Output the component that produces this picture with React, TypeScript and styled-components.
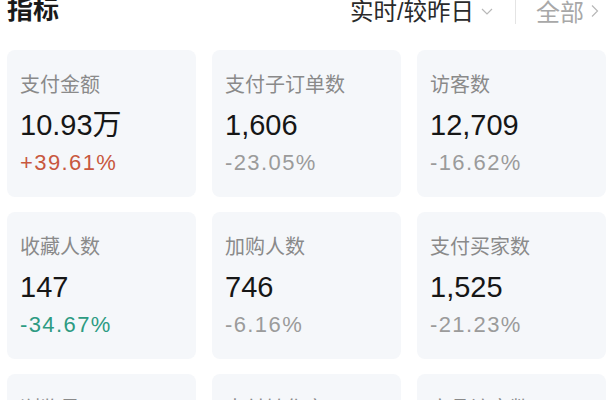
import React from 'react';
import styled, { createGlobalStyle } from 'styled-components';

type Trend = 'up' | 'down' | 'flat';

interface Metric {
  label: string,
  value: string,
  change: string,
  trend: Trend
}

const metrics: Metric[] = [
  {label: '支付金额', value: '10.93万', change: '+39.61%', trend: 'up'},
  {label: '支付子订单数', value: '1,606', change: '-23.05%', trend: 'flat'},
  {label: '访客数', value: '12,709', change: '-16.62%', trend: 'flat'},
  {label: '收藏人数', value: '147', change: '-34.67%', trend: 'down'},
  {label: '加购人数', value: '746', change: '-6.16%', trend: 'flat'},
  {label: '支付买家数', value: '1,525', change: '-21.23%', trend: 'flat'},
  {label: '浏览量', value: '38,214', change: '-12.08%', trend: 'flat'},
  {label: '支付转化率', value: '12.00%', change: '-5.47%', trend: 'flat'},
  {label: '商品访客数', value: '9,873', change: '-18.31%', trend: 'flat'},
];

const trendColors: Record<Trend, string> = {
  up: '#c8583f',
  down: '#2d9b82',
  flat: '#9b9b9b',
};

function Chevron({dir}: {dir: 'down' | 'right'}) {
  return (
    <svg width="16" height="16" viewBox="0 0 16 16" fill="none" stroke="currentColor" strokeWidth="1.2">
      {dir === 'down'
        ? <path d="M3 6 L8 11 L13 6" />
        : <path d="M5 2.5 L10.5 8 L5 13.5" />}
    </svg>
  );
}

function MetricCard({metric}: {metric: Metric}) {
  return (
    <Card>
      <Label>{metric.label}</Label>
      <Value>{metric.value}</Value>
      <Change trend={metric.trend}>{metric.change}</Change>
    </Card>
  );
}

export default function App() {
  return (
    <>
      <GlobalStyle />
      <Page>
        <Header>
          <Title>指标</Title>
          <Actions>
            <Period>实时/较昨日<Chevron dir="down" /></Period>
            <Divider />
            <More>全部<Chevron dir="right" /></More>
          </Actions>
        </Header>
        <Grid>
          {metrics.map((m, i) => <MetricCard metric={m} key={i} />)}
        </Grid>
      </Page>
    </>
  );
}

const GlobalStyle = createGlobalStyle`
  html, body {
    margin: 0;
    padding: 0;
    background: #ffffff;
  }
  body {
    font-family: "Liberation Sans", "Noto Sans CJK SC", sans-serif;
  }
`;

const Page = styled.div`
  width: 616px;
  height: 400px;
  overflow: hidden;
  padding: 0 10px 0 7px;
  box-sizing: border-box;
`;

const Header = styled.div`
  display: flex;
  align-items: center;
  justify-content: space-between;
  height: 28px;
  margin-top: -4px;
  margin-bottom: 26px;
`;

const Title = styled.div`
  font-size: 26px;
  font-weight: bold;
  color: #1a1a1a;
  line-height: 28px;
`;

const Actions = styled.div`
  display: flex;
  align-items: center;
  padding-right: 3px;
`;

const Period = styled.div`
  display: flex;
  align-items: center;
  gap: 5px;
  font-size: 23.5px;
  color: #2a2a2a;
  svg {
    color: #b8b8b8;
    margin-top: 2px;
  }
`;

const Divider = styled.div`
  width: 1px;
  height: 24px;
  background: #e4e4e4;
  margin: 4px 20px 0 20px;
`;

const More = styled.div`
  display: flex;
  align-items: center;
  gap: 3px;
  font-size: 24px;
  color: #a8a8a8;
  svg {
    color: #b8b8b8;
    margin-top: 2px;
  }
`;

const Grid = styled.div`
  display: grid;
  grid-template-columns: repeat(3, 1fr);
  column-gap: 16px;
  row-gap: 15px;
`;

const Card = styled.div`
  background: #f5f7fa;
  border-radius: 8px;
  padding: 23px 13px 19px;
  display: flex;
  flex-direction: column;
`;

const Label = styled.div`
  font-size: 20px;
  line-height: 24px;
  color: #8a8a8a;
`;

const Value = styled.div`
  margin-top: 10px;
  font-size: 29px;
  line-height: 36px;
  color: #161616;
`;

const Change = styled.div<{trend: Trend}>`
  margin-top: 5px;
  font-size: 22px;
  line-height: 30px;
  letter-spacing: 1.4px;
  color: ${p => trendColors[p.trend]};
`;
